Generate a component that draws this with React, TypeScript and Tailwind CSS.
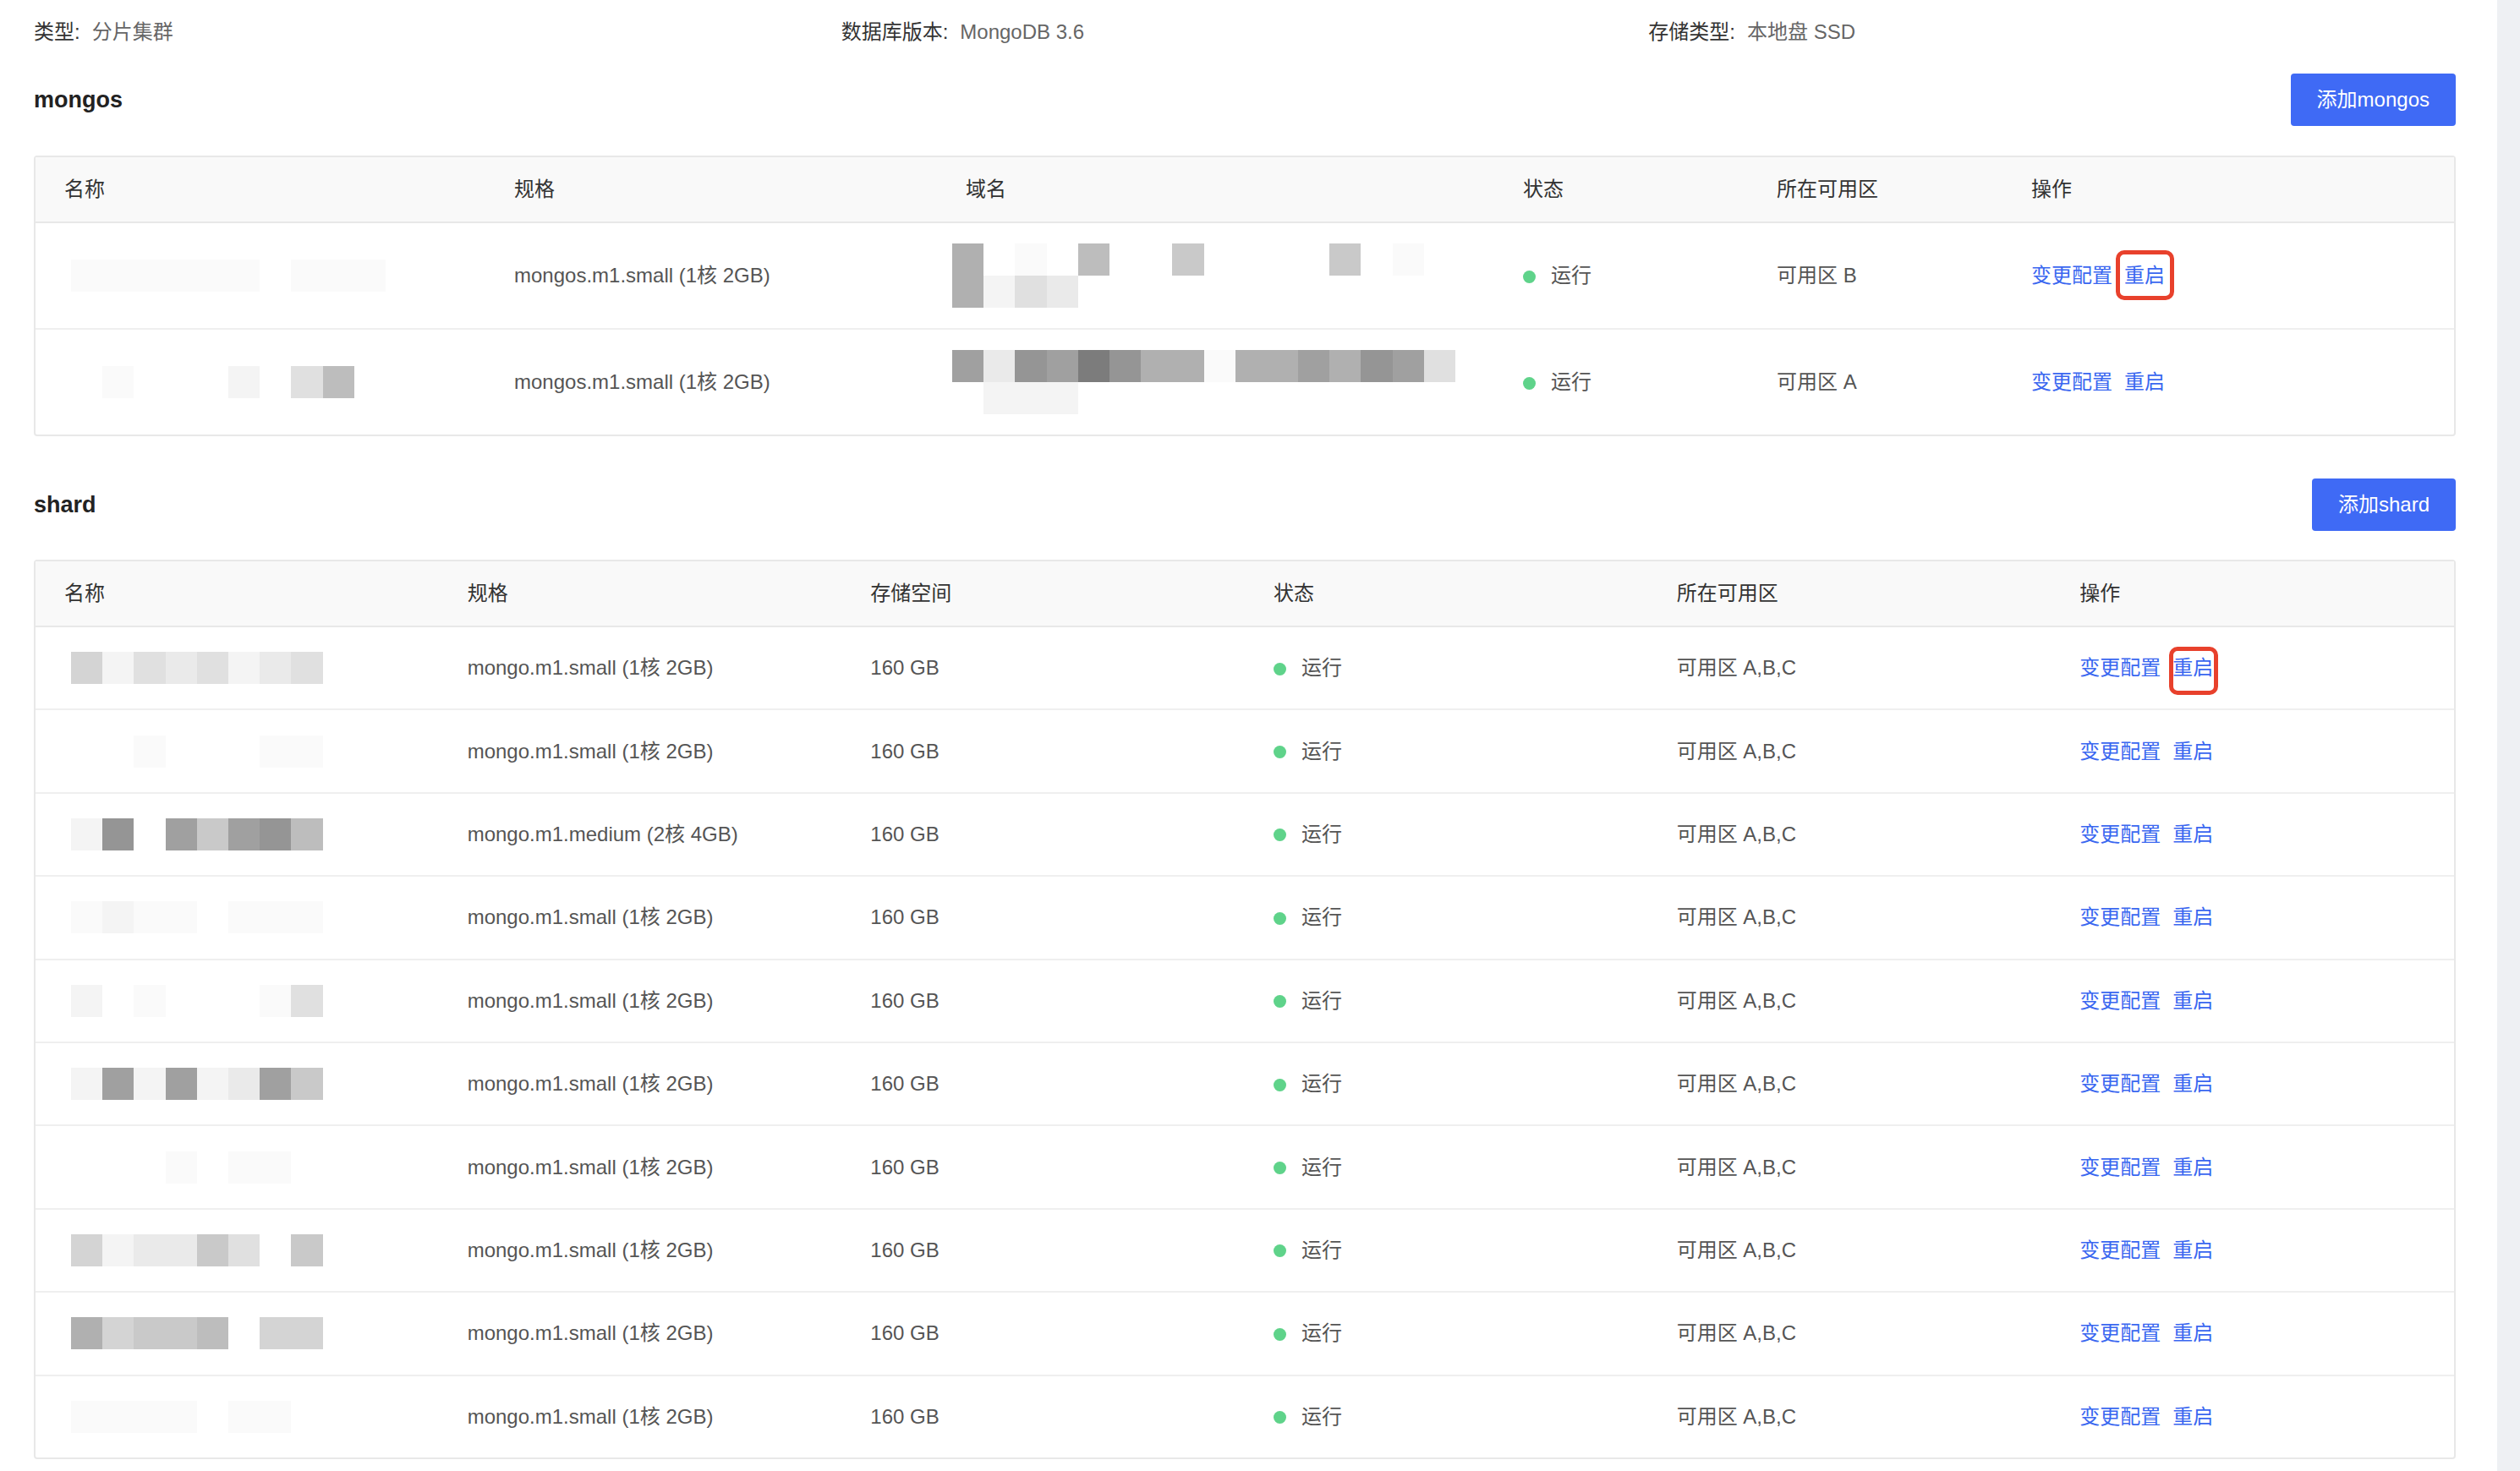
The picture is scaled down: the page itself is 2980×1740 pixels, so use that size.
import React from "react";

// mosaic shades used for the redacted cells
const SHADE: Record<string, string> = {
  "0": "bg-[#fafafa]",
  "1": "bg-[#f4f4f4]",
  "2": "bg-[#eaeaea]",
  "3": "bg-[#e0e0e0]",
  "4": "bg-[#d4d4d4]",
  "5": "bg-[#c9c9c9]",
  "6": "bg-[#bdbdbd]",
  "7": "bg-[#b0b0b0]",
  "8": "bg-[#a0a0a0]",
  "9": "bg-[#959595]",
  x: "bg-[#7c7c7c]",
};

function Mosaic({ lines, className = "" }: { lines: string[]; className?: string }) {
  return (
    <div className={"flex flex-col " + className}>
      {lines.map((line, i) => (
        <div key={i} className="flex">
          {line.split("").map((c, j) => (
            <div key={j} className={"w-[37.2px] h-[38px] " + (SHADE[c] ?? "")} />
          ))}
        </div>
      ))}
    </div>
  );
}

function Status() {
  return (
    <div className="flex items-center">
      <span className="w-[15px] h-[15px] rounded-full bg-[#5fd38a] mr-[18px] mt-[2px]" />
      <span className="text-[#555]">运行</span>
    </div>
  );
}

function Actions({ marked = false, box = "" }: { marked?: boolean; box?: string }) {
  return (
    <div className="flex items-center text-[#3a67f0]">
      <span>变更配置</span>
      <span className="relative ml-[14px]">
        重启
        {marked && (
          <span
            className={
              "absolute border-[5px] border-[#e8412c] rounded-[10px] " + box
            }
          />
        )}
      </span>
    </div>
  );
}

function SectionHeader({ title, button }: { title: string; button: string }) {
  return (
    <div className="flex items-center justify-between h-[62px]">
      <h2 className="text-[27px] font-bold text-[#222]">{title}</h2>
      <button className="h-[62px] px-[31px] rounded-[4px] bg-[#3f6af5] text-white text-[24px]">
        {button}
      </button>
    </div>
  );
}

const mongosRows = [
  {
    name: ["000000.000"],
    domain: ["7.0.6..5....5.0", "7132"],
    spec: "mongos.m1.small (1核 2GB)",
    zone: "可用区 B",
    marked: true,
  },
  {
    name: [".0...1.36"],
    domain: ["8298x97707787983", ".111"],
    spec: "mongos.m1.small (1核 2GB)",
    zone: "可用区 A",
    marked: false,
  },
];

const shardNames = [
  "41323123",
  "..0...00",
  "19.85896",
  "0100.000",
  "1.0...03",
  "18181285",
  "...0.00.",
  "412253.5",
  "74556.44",
  "0000.00.",
];

const shardRows = shardNames.map((name, i) => ({
  name: [name],
  spec: i === 2 ? "mongo.m1.medium (2核 4GB)" : "mongo.m1.small (1核 2GB)",
  storage: "160 GB",
  zone: "可用区 A,B,C",
  marked: i === 0,
}));

const mongosCols = "grid grid-cols-[532px_534px_659px_300px_301px_1fr]";

function MongosTable() {
  return (
    <div className="border-2 border-[#e8e8e8] rounded-[4px] text-[24px]">
      <div className={mongosCols + " h-[78px] items-center bg-[#f9f9f9] border-b-2 border-[#e8e8e8] text-[#333]"}>
        {["名称", "规格", "域名", "状态", "所在可用区", "操作"].map((h) => (
          <div key={h} className="pl-[34px]">
            {h}
          </div>
        ))}
      </div>
      {mongosRows.map((r, i) => (
        <div
          key={i}
          className={
            mongosCols +
            " h-[124px] items-center text-[#555] " +
            (i < mongosRows.length - 1 ? "border-b-2 border-[#efefef] box-content" : "")
          }
        >
          <div className="pl-[34px]">
            <Mosaic lines={r.name} className="ml-[8px]" />
          </div>
          <div className="pl-[34px]">{r.spec}</div>
          <div className="pl-[34px]">
            <Mosaic lines={r.domain} className="-ml-[16px]" />
          </div>
          <div className="pl-[34px]">
            <Status />
          </div>
          <div className="pl-[34px]">{r.zone}</div>
          <div className="pl-[34px]">
            <Actions marked={r.marked} box="-left-[10px] -top-[12px] w-[69px] h-[59px]" />
          </div>
        </div>
      ))}
    </div>
  );
}

function ShardTable() {
  return (
    <div className="border-2 border-[#e8e8e8] rounded-[4px] text-[24px]">
      <div className="grid grid-cols-6 h-[78px] items-center bg-[#f9f9f9] border-b-2 border-[#e8e8e8] text-[#333]">
        {["名称", "规格", "存储空间", "状态", "所在可用区", "操作"].map((h) => (
          <div key={h} className="pl-[34px]">
            {h}
          </div>
        ))}
      </div>
      {shardRows.map((r, i) => (
        <div
          key={i}
          className={
            "grid grid-cols-6 h-[96.4px] items-center text-[#555] " +
            (i < shardRows.length - 1 ? "border-b-2 border-[#efefef] box-content" : "")
          }
        >
          <div className="pl-[34px]">
            <Mosaic lines={r.name} className="ml-[8px]" />
          </div>
          <div className="pl-[34px]">{r.spec}</div>
          <div className="pl-[34px]">{r.storage}</div>
          <div className="pl-[34px]">
            <Status />
          </div>
          <div className="pl-[34px]">{r.zone}</div>
          <div className="pl-[34px]">
            <Actions marked={r.marked} box="-left-[4px] -top-[7px] w-[58px] h-[57px]" />
          </div>
        </div>
      ))}
    </div>
  );
}

export default function App() {
  return (
    <div className="flex h-screen bg-white font-['Liberation_Sans','Noto_Sans_CJK_SC',sans-serif] overflow-hidden">
      <main className="flex-1 pl-[40px] pr-[49px]">
        {/* INFO */}
        <div className="grid grid-cols-3 pt-[20px] leading-[36px] text-[24px]">
          <div>
            <span className="text-[#333]">类型:</span>
            <span className="ml-[14px] text-[#666]">分片集群</span>
          </div>
          <div>
            <span className="text-[#333]">数据库版本:</span>
            <span className="ml-[14px] text-[#666]">MongoDB 3.6</span>
          </div>
          <div>
            <span className="text-[#333]">存储类型:</span>
            <span className="ml-[14px] text-[#666]">本地盘 SSD</span>
          </div>
        </div>

        {/* MONGOS */}
        <div className="mt-[31px]">
          <SectionHeader title="mongos" button="添加mongos" />
        </div>
        <div className="mt-[35px]">
          <MongosTable />
        </div>

        {/* SHARD */}
        <div className="mt-[50px]">
          <SectionHeader title="shard" button="添加shard" />
        </div>
        <div className="mt-[34px]">
          <ShardTable />
        </div>
      </main>
      <aside className="w-[27px] h-full bg-[#eef0f3]" />
    </div>
  );
}
